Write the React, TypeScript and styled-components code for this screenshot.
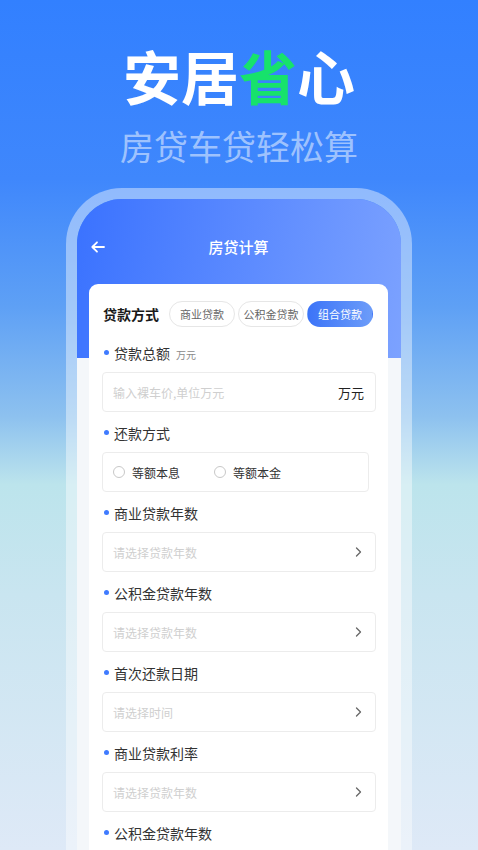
import React from "react";
import styled, { createGlobalStyle } from "styled-components";

const Global = createGlobalStyle`
  html, body { margin: 0; padding: 0; }
  body { font-family: "Noto Sans CJK SC", "Noto Sans", sans-serif; }
  * { box-sizing: border-box; }
`;

const Page = styled.div`
  width: 478px;
  height: 850px;
  overflow: hidden;
  display: flex;
  flex-direction: column;
  align-items: center;
  background: linear-gradient(
    180deg,
    #3280ff 0%,
    #3f87fc 21%,
    #5ea0f5 36%,
    #8dc1ef 49%,
    #bce4ec 57%,
    #c9e5f0 70%,
    #dee9f7 100%
  );
`;

const Title = styled.h1`
  margin: 46px 0 0;
  font-size: 58px;
  line-height: 58px;
  font-weight: 700;
  color: #ffffff;
  letter-spacing: 0;
`;

const Accent = styled.span`
  color: #17e26b;
`;

const Subtitle = styled.div`
  margin-top: 25px;
  font-size: 34px;
  line-height: 34px;
  color: rgba(255, 255, 255, 0.52);
  font-weight: 400;
`;

const Frame = styled.div`
  margin-top: 25px;
  width: 346px;
  flex: 1;
  border: 11px solid rgba(255, 255, 255, 0.42);
  border-bottom: none;
  border-radius: 56px 56px 0 0;
  display: flex;
`;

const Screen = styled.div`
  flex: 1;
  border-radius: 45px 45px 0 0;
  overflow: hidden;
  background-color: #f4f7fa;
  background-image: linear-gradient(100deg, #3a72ff 0%, #7ca2ff 100%);
  background-size: 100% 159px;
  background-repeat: no-repeat;
  display: flex;
  flex-direction: column;
  padding: 0 13px 0 12px;
`;

const NavBar = styled.div`
  height: 85px;
  padding-top: 37px;
  display: grid;
  grid-template-columns: 40px 1fr 40px;
  align-items: start;
`;

const Back = styled.div`
  height: 22px;
  display: flex;
  align-items: center;
  padding-left: 2px;
`;

const NavTitle = styled.div`
  text-align: center;
  color: #ffffff;
  font-size: 15px;
  line-height: 22px;
  font-weight: 500;
`;

const Card = styled.div`
  background: #ffffff;
  border-radius: 9px 9px 0 0;
  padding: 17px 12px 0 13px;
  flex: 1;
  display: flex;
  flex-direction: column;
`;

const TypeRow = styled.div`
  display: flex;
  align-items: center;
  height: 26px;
`;

const TypeLabel = styled.div`
  font-size: 14px;
  font-weight: 700;
  color: #1a1a1a;
  width: 67px;
  padding-left: 1px;
`;

const Chips = styled.div`
  display: flex;
  gap: 3px;
`;

const Chip = styled.div<{ $active?: boolean }>`
  width: 66px;
  height: 26px;
  border-radius: 13px;
  display: flex;
  align-items: center;
  justify-content: center;
  font-size: 11px;
  color: ${(p) => (p.$active ? "#ffffff" : "#666666")};
  border: 1px solid ${(p) => (p.$active ? "transparent" : "#e6e6e6")};
  background: ${(p) =>
    p.$active ? "linear-gradient(90deg, #3c74f8 0%, #6c9cf9 100%)" : "#ffffff"};
`;

const Field = styled.div<{ $first?: boolean }>`
  margin-top: ${(p) => (p.$first ? "16px" : "11px")};
  display: flex;
  flex-direction: column;
`;

const LabelRow = styled.div`
  height: 20px;
  display: flex;
  align-items: center;
  padding-left: 2px;
  margin-bottom: 9px;
`;

const Dot = styled.span`
  width: 5px;
  height: 5px;
  border-radius: 50%;
  background: #3f7bff;
  margin-right: 5px;
  margin-top: -2px;
`;

const Label = styled.span`
  font-size: 14px;
  color: #333333;
`;

const Unit = styled.span`
  font-size: 10px;
  color: #8a8a8a;
  margin-left: 6px;
  margin-top: 2px;
`;

const Box = styled.div<{ $narrow?: boolean }>`
  height: 40px;
  border: 1px solid #ececec;
  border-radius: 4px;
  background: #ffffff;
  display: flex;
  align-items: center;
  padding: 0 10px 0 10px;
  margin-right: ${(p) => (p.$narrow ? "7px" : "0")};
`;

const Placeholder = styled.span`
  flex: 1;
  font-size: 12px;
  color: #cfcfcf;
`;

const Suffix = styled.span`
  font-size: 13px;
  color: #222222;
  margin-right: 1px;
`;

const RadioItem = styled.div`
  display: flex;
  align-items: center;
  width: 101px;
`;

const Circle = styled.span`
  width: 12px;
  height: 12px;
  border-radius: 50%;
  border: 1px solid #c8c8c8;
  margin-right: 7px;
`;

const RadioText = styled.span`
  font-size: 12px;
  color: #333333;
`;

const Chevron = () => (
  <svg width="7" height="10" viewBox="0 0 7 10" style={{ marginRight: 3 }}>
    <path d="M1.5 1 L5.5 5 L1.5 9" fill="none" stroke="#666" strokeWidth="1.3" strokeLinecap="round" strokeLinejoin="round" />
  </svg>
);

const ArrowLeft = () => (
  <svg width="14" height="12" viewBox="0 0 14 12">
    <path d="M13 6 H1.5 M6 1.3 L1.3 6 L6 10.7" fill="none" stroke="#fff" strokeWidth="1.8" strokeLinecap="round" strokeLinejoin="round" />
  </svg>
);

const SelectField = ({ label, placeholder }: { label: string; placeholder: string }) => (
  <Field>
    <LabelRow>
      <Dot />
      <Label>{label}</Label>
    </LabelRow>
    <Box>
      <Placeholder>{placeholder}</Placeholder>
      <Chevron />
    </Box>
  </Field>
);

export default function App() {
  return (
    <>
      <Global />
      <Page>
        <Title>
          安居<Accent>省</Accent>心
        </Title>
        <Subtitle>房贷车贷轻松算</Subtitle>
        <Frame>
          <Screen>
            <NavBar>
              <Back>
                <ArrowLeft />
              </Back>
              <NavTitle>房贷计算</NavTitle>
              <div />
            </NavBar>
            <Card>
              <TypeRow>
                <TypeLabel>贷款方式</TypeLabel>
                <Chips>
                  <Chip>商业贷款</Chip>
                  <Chip>公积金贷款</Chip>
                  <Chip $active>组合贷款</Chip>
                </Chips>
              </TypeRow>
              <Field $first>
                <LabelRow>
                  <Dot />
                  <Label>贷款总额</Label>
                  <Unit>万元</Unit>
                </LabelRow>
                <Box>
                  <Placeholder>输入裸车价,单位万元</Placeholder>
                  <Suffix>万元</Suffix>
                </Box>
              </Field>
              <Field>
                <LabelRow>
                  <Dot />
                  <Label>还款方式</Label>
                </LabelRow>
                <Box $narrow>
                  <RadioItem>
                    <Circle />
                    <RadioText>等额本息</RadioText>
                  </RadioItem>
                  <RadioItem>
                    <Circle />
                    <RadioText>等额本金</RadioText>
                  </RadioItem>
                </Box>
              </Field>
              <SelectField label="商业贷款年数" placeholder="请选择贷款年数" />
              <SelectField label="公积金贷款年数" placeholder="请选择贷款年数" />
              <SelectField label="首次还款日期" placeholder="请选择时间" />
              <SelectField label="商业贷款利率" placeholder="请选择贷款年数" />
              <SelectField label="公积金贷款年数" placeholder="请选择贷款年数" />
            </Card>
          </Screen>
        </Frame>
      </Page>
    </>
  );
}
